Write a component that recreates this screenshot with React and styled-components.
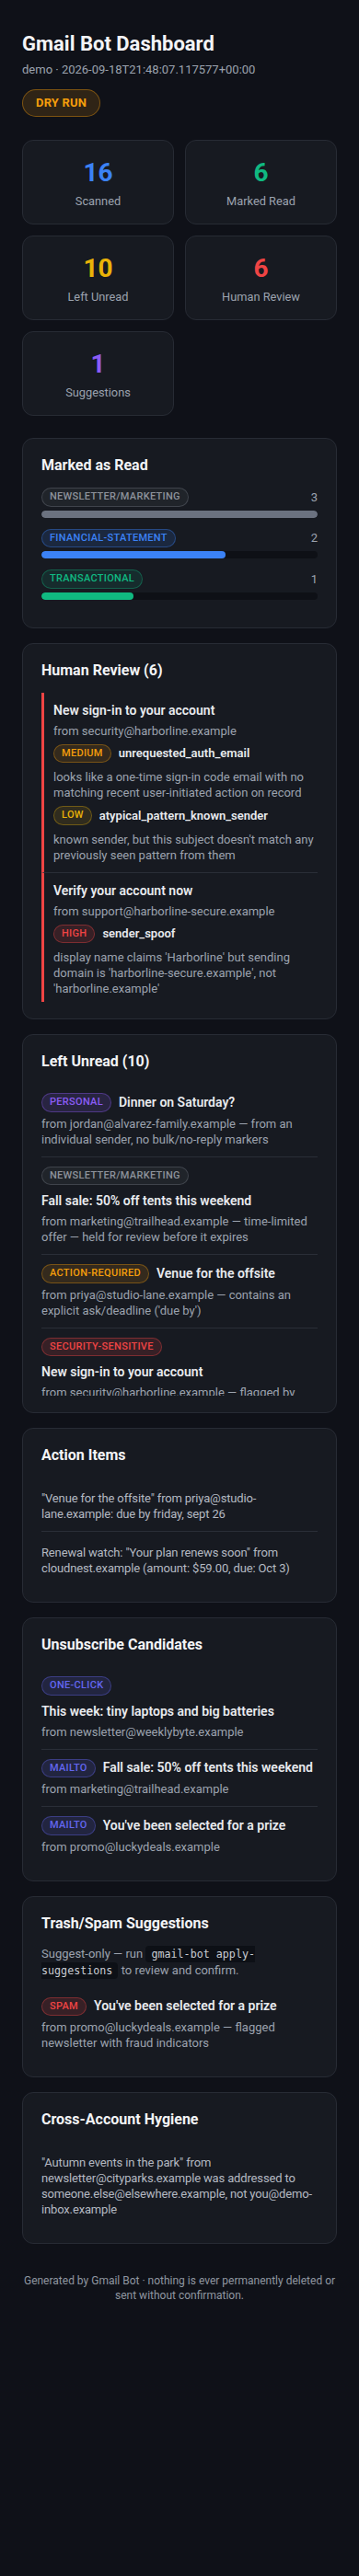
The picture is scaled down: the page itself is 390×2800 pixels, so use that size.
import React from "react";
import styled, { createGlobalStyle } from "styled-components";

const GlobalStyle = createGlobalStyle`
  * { box-sizing: border-box; }
  html, body {
    margin: 0;
    padding: 0;
    background: #0f1118;
  }
  body {
    font-family: Roboto, "Liberation Sans", sans-serif;
    color: #e5e7eb;
  }
`;

const tones = {
  gray: { fg: "#8d929b", bg: "rgba(156,163,175,0.07)", bd: "rgba(156,163,175,0.26)" },
  blue: { fg: "#3b82f6", bg: "rgba(59,130,246,0.14)", bd: "rgba(59,130,246,0.38)" },
  green: { fg: "#10b981", bg: "rgba(16,185,129,0.12)", bd: "rgba(16,185,129,0.36)" },
  violet: { fg: "#8b5cf6", bg: "rgba(139,92,246,0.15)", bd: "rgba(139,92,246,0.38)" },
  orange: { fg: "#f59e0b", bg: "rgba(245,158,11,0.13)", bd: "rgba(245,158,11,0.36)" },
  yellow: { fg: "#eab308", bg: "rgba(234,179,8,0.12)", bd: "rgba(234,179,8,0.34)" },
  red: { fg: "#ef4444", bg: "rgba(239,68,68,0.15)", bd: "rgba(239,68,68,0.38)" },
  indigo: { fg: "#6366f1", bg: "rgba(99,102,241,0.15)", bd: "rgba(99,102,241,0.38)" },
};

const Page = styled.div`
  padding: 34px 24px 40px;
`;

const Title = styled.h1`
  margin: 0;
  font-size: 22px;
  line-height: 28px;
  font-weight: 700;
  color: #f3f4f6;
`;

const Subtitle = styled.div`
  margin-top: 5px;
  font-size: 13px;
  line-height: 18px;
  color: #9ca3af;
`;

const ModeBadge = styled.div`
  display: inline-block;
  margin-top: 12px;
  padding: 6px 14px;
  border-radius: 999px;
  border: 1px solid rgba(245, 158, 11, 0.4);
  background: rgba(245, 158, 11, 0.14);
  color: #f59e0b;
  font-size: 13px;
  line-height: 16px;
  font-weight: 700;
  letter-spacing: 0.2px;
`;

const StatGrid = styled.div`
  display: grid;
  grid-template-columns: 1fr 1fr;
  gap: 12px;
  margin: 25px 0 24px;
`;

const StatCard = styled.div`
  background: #171a21;
  border: 1px solid #272b34;
  border-radius: 12px;
  padding: 18px 12px 16px;
  text-align: center;
`;

const StatValue = styled.div`
  font-size: 28px;
  line-height: 34px;
  font-weight: 700;
  color: ${(p) => p.$color};
`;

const StatLabel = styled.div`
  margin-top: 6px;
  font-size: 12.8px;
  line-height: 16px;
  color: #9ca3af;
`;

const Sections = styled.div`
  display: flex;
  flex-direction: column;
  gap: 16px;
`;

const Card = styled.section`
  background: #171a21;
  border: 1px solid #272b34;
  border-radius: 12px;
  padding: 18px 20px;
`;

const CardTitle = styled.h2`
  margin: 0 0 14px;
  font-size: 16px;
  line-height: 21px;
  font-weight: 700;
  color: #f3f4f6;
`;

const Badge = styled.span`
  display: inline-block;
  flex: none;
  padding: 2px 8px;
  border-radius: 999px;
  border: 1px solid ${(p) => tones[p.$tone].bd};
  background: ${(p) => tones[p.$tone].bg};
  color: ${(p) => tones[p.$tone].fg};
  font-size: 11px;
  line-height: 14.5px;
  font-weight: 500;
  letter-spacing: 0.3px;
  text-transform: uppercase;
  white-space: nowrap;
`;

const CategoryRow = styled.div`
  margin-bottom: 12px;
`;

const RowHead = styled.div`
  display: flex;
  justify-content: space-between;
  align-items: center;
`;

const Count = styled.span`
  font-size: 13px;
  line-height: 17px;
  color: #9ca3af;
`;

const Track = styled.div`
  margin-top: 4px;
  height: 8px;
  border-radius: 4px;
  background: #0e1016;
  overflow: hidden;
`;

const Fill = styled.div`
  height: 100%;
  border-radius: 4px;
  background: ${(p) => p.$color};
`;

const ReviewItem = styled.div`
  border-left: 3px solid #ef4444;
  border-bottom: 1px solid #2a2e37;
  padding: 10px 0 10px 10px;

  &:last-child {
    border-bottom: none;
    padding-bottom: 6px;
  }
`;

const Subject = styled.div`
  font-size: 14px;
  line-height: 19px;
  font-weight: 600;
  color: #e8eaee;
`;

const Meta = styled.div`
  margin-top: ${(p) => p.$mt ?? 4}px;
  font-size: 13px;
  line-height: 17px;
  color: #9ca3af;
`;

const ReasonRow = styled.div`
  display: flex;
  align-items: center;
  gap: 8px;
  margin-top: 6px;
`;

const ReasonName = styled.span`
  font-size: 13px;
  line-height: 17px;
  font-weight: 600;
  color: #e8eaee;
`;

const List = styled.div`
  max-height: ${(p) => (p.$maxHeight ? `${p.$maxHeight}px` : "none")};
  overflow: hidden;
`;

const ListItem = styled.div`
  padding: ${(p) => (p.$plain ? "14px 0 10px" : "10px 0")};
  border-bottom: 1px solid #2a2e37;

  &:last-child {
    border-bottom: none;
  }
`;

const ItemHead = styled.div`
  display: flex;
  flex-wrap: wrap;
  align-items: center;
  gap: 8px;
`;

const BodyText = styled.div`
  font-size: 13px;
  line-height: 17px;
  letter-spacing: -0.15px;
  color: #b4b9c2;
`;

const Note = styled.p`
  margin: 0 0 10px;
  font-size: 13px;
  line-height: 17px;
  color: #9ca3af;
`;

const Code = styled.code`
  font-family: "DejaVu Sans Mono", "Liberation Mono", monospace;
  font-size: 11.7px;
  padding: 2px 6px;
  border-radius: 4px;
  background: #0d1016;
  color: #c9ccd3;
`;

const Footer = styled.footer`
  margin-top: 32px;
  text-align: center;
  font-size: 12px;
  line-height: 16px;
  color: #9097a1;
`;

const stats = [
  { value: 16, label: "Scanned", color: "#3b82f6" },
  { value: 6, label: "Marked Read", color: "#10b981" },
  { value: 10, label: "Left Unread", color: "#eab308" },
  { value: 6, label: "Human Review", color: "#ef4444" },
  { value: 1, label: "Suggestions", color: "#8b5cf6" },
];

const marked = [
  { label: "newsletter/marketing", tone: "gray", count: 3, bar: "#6b7280" },
  { label: "financial-statement", tone: "blue", count: 2, bar: "#3b82f6" },
  { label: "transactional", tone: "green", count: 1, bar: "#10b981" },
];

const review = [
  {
    subject: "New sign-in to your account",
    from: "security@harborline.example",
    reasons: [
      {
        level: "medium",
        tone: "orange",
        name: "unrequested_auth_email",
        desc: "looks like a one-time sign-in code email with no matching recent user-initiated action on record",
      },
      {
        level: "low",
        tone: "yellow",
        name: "atypical_pattern_known_sender",
        desc: "known sender, but this subject doesn't match any previously seen pattern from them",
      },
    ],
  },
  {
    subject: "Verify your account now",
    from: "support@harborline-secure.example",
    reasons: [
      {
        level: "high",
        tone: "red",
        name: "sender_spoof",
        desc: "display name claims 'Harborline' but sending domain is 'harborline-secure.example', not 'harborline.example'",
      },
    ],
  },
];

const unread = [
  {
    tag: "personal",
    tone: "violet",
    subject: "Dinner on Saturday?",
    meta: "from jordan@alvarez-family.example — from an individual sender, no bulk/no-reply markers",
  },
  {
    tag: "newsletter/marketing",
    tone: "gray",
    subject: "Fall sale: 50% off tents this weekend",
    meta: "from marketing@trailhead.example — time-limited offer — held for review before it expires",
  },
  {
    tag: "action-required",
    tone: "orange",
    subject: "Venue for the offsite",
    meta: "from priya@studio-lane.example — contains an explicit ask/deadline ('due by')",
  },
  {
    tag: "security-sensitive",
    tone: "red",
    subject: "New sign-in to your account",
    meta: "from security@harborline.example — flagged by",
  },
];

const actions = [
  '"Venue for the offsite" from priya@studio-lane.example: due by friday, sept 26',
  'Renewal watch: "Your plan renews soon" from cloudnest.example (amount: $59.00, due: Oct 3)',
];

const unsubscribe = [
  { kind: "one-click", subject: "This week: tiny laptops and big batteries", from: "newsletter@weeklybyte.example" },
  { kind: "mailto", subject: "Fall sale: 50% off tents this weekend", from: "marketing@trailhead.example" },
  { kind: "mailto", subject: "You've been selected for a prize", from: "promo@luckydeals.example" },
];

export default function App() {
  const maxMarked = Math.max(...marked.map((m) => m.count));
  return (
    <>
      <GlobalStyle />
      <Page>
        <header>
          <Title>Gmail Bot Dashboard</Title>
          <Subtitle>demo · 2026-09-18T21:48:07.117577+00:00</Subtitle>
          <ModeBadge>DRY RUN</ModeBadge>
        </header>

        <StatGrid>
          {stats.map((s) => (
            <StatCard key={s.label}>
              <StatValue $color={s.color}>{s.value}</StatValue>
              <StatLabel>{s.label}</StatLabel>
            </StatCard>
          ))}
        </StatGrid>

        <Sections>
          <Card>
            <CardTitle>Marked as Read</CardTitle>
            {marked.map((m) => (
              <CategoryRow key={m.label}>
                <RowHead>
                  <Badge $tone={m.tone}>{m.label}</Badge>
                  <Count>{m.count}</Count>
                </RowHead>
                <Track>
                  <Fill $color={m.bar} style={{ width: `${(m.count / maxMarked) * 100}%` }} />
                </Track>
              </CategoryRow>
            ))}
          </Card>

          <Card>
            <CardTitle>Human Review (6)</CardTitle>
            <div>
              {review.map((r) => (
                <ReviewItem key={r.subject}>
                  <Subject>{r.subject}</Subject>
                  <Meta>from {r.from}</Meta>
                  {r.reasons.map((reason) => (
                    <React.Fragment key={reason.name}>
                      <ReasonRow>
                        <Badge $tone={reason.tone}>{reason.level}</Badge>
                        <ReasonName>{reason.name}</ReasonName>
                      </ReasonRow>
                      <Meta $mt={7}>{reason.desc}</Meta>
                    </React.Fragment>
                  ))}
                </ReviewItem>
              ))}
            </div>
          </Card>

          <Card>
            <CardTitle>Left Unread (10)</CardTitle>
            <List $maxHeight={339}>
              {unread.map((u, i) => (
                <ListItem key={i}>
                  <ItemHead>
                    <Badge $tone={u.tone}>{u.tag}</Badge>
                    <Subject>{u.subject}</Subject>
                  </ItemHead>
                  <Meta>{u.meta}</Meta>
                </ListItem>
              ))}
            </List>
          </Card>

          <Card>
            <CardTitle>Action Items</CardTitle>
            <List>
              {actions.map((a) => (
                <ListItem key={a} $plain>
                  <BodyText>{a}</BodyText>
                </ListItem>
              ))}
            </List>
          </Card>

          <Card>
            <CardTitle>Unsubscribe Candidates</CardTitle>
            <List>
              {unsubscribe.map((u) => (
                <ListItem key={u.subject}>
                  <ItemHead>
                    <Badge $tone="indigo">{u.kind}</Badge>
                    <Subject>{u.subject}</Subject>
                  </ItemHead>
                  <Meta>from {u.from}</Meta>
                </ListItem>
              ))}
            </List>
          </Card>

          <Card>
            <CardTitle>Trash/Spam Suggestions</CardTitle>
            <Note>
              Suggest-only — run <Code>gmail-bot apply-suggestions</Code> to review and confirm.
            </Note>
            <List>
              <ListItem>
                <ItemHead>
                  <Badge $tone="red">spam</Badge>
                  <Subject>You've been selected for a prize</Subject>
                </ItemHead>
                <Meta>from promo@luckydeals.example — flagged newsletter with fraud indicators</Meta>
              </ListItem>
            </List>
          </Card>

          <Card>
            <CardTitle>Cross-Account Hygiene</CardTitle>
            <List>
              <ListItem $plain>
                <BodyText>
                  "Autumn events in the park" from newsletter@cityparks.example was addressed to
                  someone.else@elsewhere.example, not you@demo-inbox.example
                </BodyText>
              </ListItem>
            </List>
          </Card>
        </Sections>

        <Footer>
          Generated by Gmail Bot · nothing is ever permanently deleted or sent without confirmation.
        </Footer>
      </Page>
    </>
  );
}
